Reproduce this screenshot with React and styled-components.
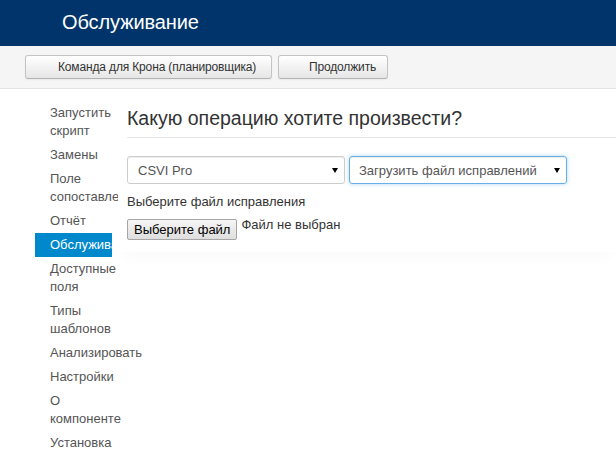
import React from 'react';
import styled, { createGlobalStyle } from 'styled-components';

const GlobalStyle = createGlobalStyle`
body {
  margin: 0;
  background: #fff;
  font-family: "Liberation Sans", Arial, sans-serif;
  color: #333;
}
`

const Header = styled.div`
height: 46px;
background-color: #00346a;
display: flex;
align-items: center;
padding-left: 62px;
`
const HeaderTitle = styled.h1`
margin: 0;
font-size: 20px;
font-weight: normal;
color: #fff;
margin-top: -2px;
letter-spacing: -0.1px;
`
const Toolbar = styled.div`
height: 43px;
background-color: #f5f5f5;
border-bottom: 1px solid #e3e3e3;
display: flex;
align-items: flex-start;
gap: 6px;
padding: 9px 0 0 25px;
box-sizing: border-box;
`
const ToolButton = styled.button`
width: ${props => props.w}px;
height: 24px;
text-align: left;
padding: 0 0 0 ${props => props.pad}px;
font-family: inherit;
font-size: 12px;
letter-spacing: -0.15px;
color: #333;
background: linear-gradient(to bottom, #ffffff, #e6e6e6);
border: 1px solid #c4c4c4;
border-bottom-color: #b3b3b3;
border-radius: 3px;
box-shadow: inset 0 1px 0 rgba(255,255,255,.2), 0 1px 2px rgba(0,0,0,.05);
`
const Body = styled.div`
display: flex;
padding-top: 10px;
`
const Sidebar = styled.ul`
list-style: none;
margin: 2px 0 0 35px;
padding: 0;
width: 83px;
flex-shrink: 0;
`
const NavItem = styled.li`
width: 77px;
box-sizing: border-box;
padding: 3px 0 3px 15px;
font-size: 13px;
line-height: 18px;
color: ${props => props.active ? '#fff' : '#555'};
background-color: ${props => props.active ? '#0088cc' : 'transparent'};
white-space: ${props => props.active ? 'nowrap' : 'normal'};
`
const Main = styled.div`
position: relative;
flex: 1;
background: #fff;
padding: 0 0 10px 9px;
height: 143px;
box-shadow: 0 12px 14px -6px rgba(0,0,0,0.025);
`
const Heading = styled.h2`
margin: 7px 0 0;
font-size: 19.5px;
font-weight: normal;
line-height: 24px;
color: #333;
padding-bottom: 7px;
border-bottom: 1px solid #e5e5e5;
`
const SelectRow = styled.div`
display: flex;
gap: 4px;
margin-top: 18px;
`
const Select = styled.div`
width: 218px;
height: 28px;
box-sizing: border-box;
display: flex;
align-items: center;
justify-content: space-between;
padding: 0 4px 0 ${props => props.focus ? 9 : 10}px;
font-size: 13px;
color: #555;
border: 1px solid ${props => props.focus ? '#66afe9' : '#ccc'};
border-radius: 3px;
box-shadow: ${props => props.focus ? 'inset 0 1px 1px rgba(0,0,0,.075), 0 0 4px rgba(102,175,233,.5)' : 'inset 0 1px 1px rgba(0,0,0,.075)'};
`
const Caret = styled.span`
width: 0;
height: 0;
margin-right: 2px;
border-left: 3px solid transparent;
border-right: 3px solid transparent;
border-top: 5px solid #000;
`
const Label = styled.div`
margin-top: 10px;
font-size: 13px;
color: #333;
`
const FileRow = styled.div`
display: flex;
align-items: flex-start;
gap: 4px;
margin-top: 10px;
`
const FileButton = styled.button`
height: 21px;
padding: 0 6px;
font-family: inherit;
font-size: 13px;
color: #000;
background: linear-gradient(to bottom, #f6f6f6, #dedede);
border: 1px solid #a6a6a6;
border-radius: 2px;
`
const FileNote = styled.span`
font-size: 13px;
color: #333;
margin-top: -2px;
`

const navItems = [
  'Запустить скрипт',
  'Замены',
  'Поле сопоставление',
  'Отчёт',
  'Обслуживание',
  'Доступные поля',
  'Типы шаблонов',
  'Анализировать',
  'Настройки',
  'О компоненте',
  'Установка',
];

function App() {
  return (
    <>
      <GlobalStyle />
      <Header>
        <HeaderTitle>Обслуживание</HeaderTitle>
      </Header>
      <Toolbar>
        <ToolButton w={247} pad={32}>Команда для Крона (планировщика)</ToolButton>
        <ToolButton w={110} pad={30}>Продолжить</ToolButton>
      </Toolbar>
      <Body>
        <Sidebar>
          {navItems.map(item => (
            <NavItem key={item} active={item === 'Обслуживание'}>{item}</NavItem>
          ))}
        </Sidebar>
        <Main>
          <Heading>Какую операцию хотите произвести?</Heading>
          <SelectRow>
            <Select>
              <span>CSVI Pro</span>
              <Caret />
            </Select>
            <Select focus>
              <span>Загрузить файл исправлений</span>
              <Caret />
            </Select>
          </SelectRow>
          <Label>Выберите файл исправления</Label>
          <FileRow>
            <FileButton>Выберите файл</FileButton>
            <FileNote>Файл не выбран</FileNote>
          </FileRow>
        </Main>
      </Body>
    </>
  )
}

export default App;
